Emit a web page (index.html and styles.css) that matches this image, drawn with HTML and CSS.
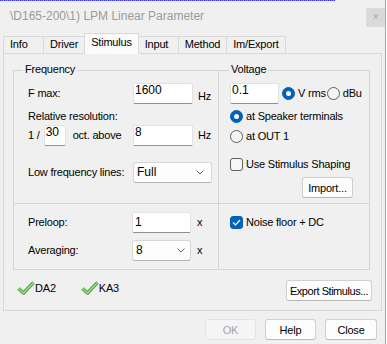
FILE: index.html
```html
<!DOCTYPE html>
<html lang="en">

<head>
    <meta charset="UTF-8">
    <meta name="viewport" content="width=device-width, initial-scale=1.0">
    <title>LPM Linear Parameter</title>
    <link rel="stylesheet" href="styles.css">
</head>

<body>
    <div class="window">
        <div class="focus-line"></div>

        <div class="titlebar">
            <span class="title">\D165-200\1) LPM Linear Parameter</span>
            <span class="close-btn">&#x2715;</span>
        </div>

        <div class="tabs">
            <div class="tab">Info</div>
            <div class="tab">Driver</div>
            <div class="tab active">Stimulus</div>
            <div class="tab">Input</div>
            <div class="tab">Method</div>
            <div class="tab">Im/Export</div>
        </div>

        <div class="panel">
            <div class="frame">
                <!-- Frequency -->
                <div class="cell freq">
                    <span class="legend">Frequency</span>
                    <div class="row">
                        <span class="label">F max:</span>
                        <span class="field field-top">1600</span>
                        <span class="unit unit-low">Hz</span>
                    </div>
                    <div class="row-text">Relative resolution:</div>
                    <div class="row row-res">
                        <span class="label label-split">1 /<span class="field field-top field-small">30</span><span class="oct">oct. above</span></span>
                        <span class="field field-top">8</span>
                        <span class="unit">Hz</span>
                    </div>
                    <div class="row row-lines">
                        <span class="label">Low frequency lines:</span>
                        <span class="select select-wide">Full
                            <svg width="8" height="5" viewBox="0 0 8 5"><polyline points="0.5,0.5 4,4 7.5,0.5" fill="none" stroke="#606060" stroke-width="1"/></svg>
                        </span>
                    </div>
                </div>

                <!-- Voltage -->
                <div class="cell voltage">
                    <span class="legend">Voltage</span>
                    <div class="row">
                        <span class="field field-top field-volt">0.1</span>
                        <span class="radio on gap-l3"></span>
                        <span class="opt">V rms</span>
                        <span class="radio gap-l1"></span>
                        <span class="opt">dBu</span>
                    </div>
                    <div class="option-row first">
                        <span class="radio on"></span>
                        <span class="opt">at Speaker terminals</span>
                    </div>
                    <div class="option-row second">
                        <span class="radio"></span>
                        <span class="opt">at OUT 1</span>
                    </div>
                    <div class="option-row shaping">
                        <span class="check"></span>
                        <span class="opt">Use Stimulus Shaping</span>
                    </div>
                    <div class="import-row">
                        <button class="btn">Import...</button>
                    </div>
                </div>

                <!-- Loops -->
                <div class="cell loops">
                    <div class="row">
                        <span class="label label-loop">Preloop:</span>
                        <span class="field field-loop">1</span>
                        <span class="unit unit-x">x</span>
                    </div>
                    <div class="row row-avg">
                        <span class="label label-loop">Averaging:</span>
                        <span class="select select-loop">8
                            <svg width="8" height="5" viewBox="0 0 8 5"><polyline points="0.5,0.5 4,4 7.5,0.5" fill="none" stroke="#606060" stroke-width="1"/></svg>
                        </span>
                        <span class="unit unit-x">x</span>
                    </div>
                </div>

                <!-- Noise -->
                <div class="cell noise">
                    <div class="option-row">
                        <span class="check on">
                            <svg width="9" height="7" viewBox="0 0 9 7"><polyline points="1,3.5 3.5,6 8,1" fill="none" stroke="#fff" stroke-width="1.2"/></svg>
                        </span>
                        <span class="opt">Noise floor + DC</span>
                    </div>
                </div>
            </div>

            <div class="panel-foot">
                <div class="status">
                    <span class="status-item">
                        <svg width="18" height="14" viewBox="0 0 18 14"><path d="M1.5 7.5 L6.5 12 L16.5 1.5" fill="none" stroke="#4f9e44" stroke-width="3.4" stroke-linejoin="round"/><path d="M1.5 7.5 L6.5 12 L16.5 1.5" fill="none" stroke="#9be28a" stroke-width="1.3" stroke-linejoin="round"/></svg>DA2
                    </span>
                    <span class="status-item">
                        <svg width="18" height="14" viewBox="0 0 18 14"><path d="M1.5 7.5 L6.5 12 L16.5 1.5" fill="none" stroke="#4f9e44" stroke-width="3.4" stroke-linejoin="round"/><path d="M1.5 7.5 L6.5 12 L16.5 1.5" fill="none" stroke="#9be28a" stroke-width="1.3" stroke-linejoin="round"/></svg>KA3
                    </span>
                </div>
                <button class="btn btn-export">Export Stimulus...</button>
            </div>
        </div>

        <div class="dialog-buttons">
            <button class="btn" disabled>OK</button>
            <button class="btn">Help</button>
            <button class="btn btn-close">Close</button>
        </div>
    </div>
</body>

</html>
```

FILE: styles.css
```css
:root {
    --window-bg: #f0f0f0;
    --line-color: #d5d5d5;
    --tab-border: #d9d9d9;
    --accent: #0062b8;
}

body {
    font-family: 'Liberation Sans', Arial, sans-serif;
    font-size: 11px;
    letter-spacing: -0.2px;
    line-height: 13px;
    color: #000;
    background-color: #fff;
    margin: 0;
}

.window {
    width: 385px;
    height: 344px;
    background: var(--window-bg);
    border-right: 1px solid #a8a8a8;
}

.focus-line {
    width: 335px;
    height: 1px;
    background: repeating-linear-gradient(90deg, #2f2fe0 0 1px, #9a9af0 1px 2px);
}

.titlebar {
    height: 32px;
    display: flex;
    justify-content: space-between;
    align-items: flex-start;
}

.title {
    margin: 8px 0 0 10px;
    font-size: 12px;
    line-height: 14px;
    letter-spacing: 0;
    color: #9b9b9b;
}

.close-btn {
    width: 19px;
    height: 19px;
    margin-top: 7px;
    background: #dadada;
    color: #b0b0b0;
    font-size: 9px;
    display: flex;
    align-items: center;
    justify-content: center;
}

/* tabs */
.tabs {
    position: relative;
    z-index: 1;
    display: flex;
    align-items: flex-end;
    height: 20px;
    margin-left: 3px;
}

.tab {
    box-sizing: border-box;
    min-width: 41px;
    height: 17px;
    padding: 0 6px;
    margin-right: -1px;
    border: 1px solid var(--tab-border);
    border-bottom: none;
    background: var(--window-bg);
    line-height: 15px;
}

.tab.active {
    height: 21px;
    margin-bottom: -1px;
    background: #fafafa;
    line-height: 17px;
}

/* tab page */
.panel {
    box-sizing: border-box;
    width: 379px;
    height: 258px;
    margin-left: 3px;
    padding: 16px 9px 0 9px;
    border: 1px solid var(--tab-border);
}

.frame {
    display: grid;
    grid-template-columns: 204px 150px;
    grid-template-rows: 132px 65px;
    gap: 1px;
    width: fit-content;
    background: var(--line-color);
    border: 1px solid var(--line-color);
}

.cell {
    position: relative;
    background: var(--window-bg);
}

.legend {
    position: absolute;
    top: -8px;
    left: 9px;
    padding: 0 2px;
    background: var(--window-bg);
}

.voltage .legend {
    left: 10px;
}

.freq {
    padding: 12px 0 0 14px;
}

.voltage {
    padding: 12px 0 0 11px;
}

.loops {
    padding: 8px 0 0 14px;
}

.noise {
    padding: 12px 0 0 11px;
}

.row {
    display: flex;
    align-items: center;
    height: 21px;
}

.row-text {
    margin-top: 6px;
}

.row-res {
    margin-top: 2px;
}

.row-lines {
    margin-top: 16px;
}

.row-avg {
    margin-top: 7px;
}

.label {
    width: 105px;
    flex-shrink: 0;
}

.label-loop {
    width: 104px;
}

.label-split {
    display: flex;
    align-items: center;
}

.oct {
    margin-left: 7px;
}

.field {
    box-sizing: border-box;
    width: 60px;
    height: 21px;
    padding: 0 1px;
    background: #fff;
    border: 1px solid #e2e2e2;
    border-bottom-color: #8f8f8f;
    border-radius: 2px;
    font-size: 12px;
    letter-spacing: 0;
    line-height: 19px;
}

.field-top {
    line-height: 13px;
}

.field-small {
    width: 22px;
    margin-left: 4px;
}

.field-volt {
    width: 49px;
}

.field-loop {
    width: 59px;
    padding-left: 2px;
}

.select {
    box-sizing: border-box;
    display: flex;
    align-items: center;
    justify-content: space-between;
    height: 21px;
    padding: 0 7px 0 3px;
    background: #fdfdfd;
    border: 1px solid #d6d6d6;
    border-bottom-color: #b4b4b4;
    border-radius: 3px;
    font-size: 12px;
    letter-spacing: 0;
}

.select-wide {
    width: 79px;
}

.select-loop {
    width: 59px;
    padding-right: 5px;
}

.unit {
    margin-left: 5px;
}

.unit-low {
    align-self: flex-end;
    margin-bottom: 1px;
}

.unit-x {
    margin-left: 6px;
}

/* radios and checks */
.radio {
    box-sizing: border-box;
    width: 13px;
    height: 13px;
    flex-shrink: 0;
    border: 1px solid #5f5f5f;
    border-radius: 50%;
    background: #f5f5f5;
}

.radio.on {
    display: flex;
    align-items: center;
    justify-content: center;
    border-color: var(--accent);
    background: var(--accent);
}

.radio.on::after {
    content: '';
    width: 5px;
    height: 5px;
    border-radius: 50%;
    background: #fff;
}

.check {
    box-sizing: border-box;
    width: 13px;
    height: 13px;
    flex-shrink: 0;
    border: 1px solid #5f5f5f;
    border-radius: 3px;
    background: #f6f6f6;
}

.check.on {
    display: flex;
    align-items: center;
    justify-content: center;
    border-color: var(--accent);
    background: var(--accent);
}

.gap-l3 {
    margin-left: 3px;
}

.gap-l1 {
    margin-left: 1px;
}

.opt {
    margin-left: 3px;
}

.option-row {
    display: flex;
    align-items: center;
    height: 13px;
}

.option-row.first {
    margin-top: 6px;
}

.option-row.second {
    margin-top: 7px;
}

.option-row.shaping {
    margin-top: 15px;
}

.import-row {
    display: flex;
    justify-content: flex-end;
    margin-top: 6px;
    padding-right: 16px;
}

/* buttons */
.btn {
    box-sizing: border-box;
    width: 51px;
    height: 21px;
    padding: 0;
    background: #fdfdfd;
    border: 1px solid #d0d0d0;
    border-bottom-color: #b9b9b9;
    border-radius: 3px;
    font-family: inherit;
    font-size: 11px;
    letter-spacing: -0.2px;
    color: #000;
}

.btn:disabled {
    background: #f5f5f5;
    border-color: #e3e3e3;
    color: #a3a3a3;
}

.btn-export {
    width: 86px;
    letter-spacing: -0.45px;
}

.btn-close {
    width: 52px;
}

.panel-foot {
    display: flex;
    justify-content: space-between;
    align-items: flex-start;
    margin-top: 10px;
}

.status {
    display: flex;
    gap: 25px;
    margin-top: 2px;
    padding-left: 4px;
}

.status-item {
    display: flex;
    align-items: center;
}

.status-item svg {
    margin-top: -2px;
}

.dialog-buttons {
    display: flex;
    justify-content: flex-end;
    gap: 9px;
    margin-top: 8px;
    padding-right: 8px;
}
```
